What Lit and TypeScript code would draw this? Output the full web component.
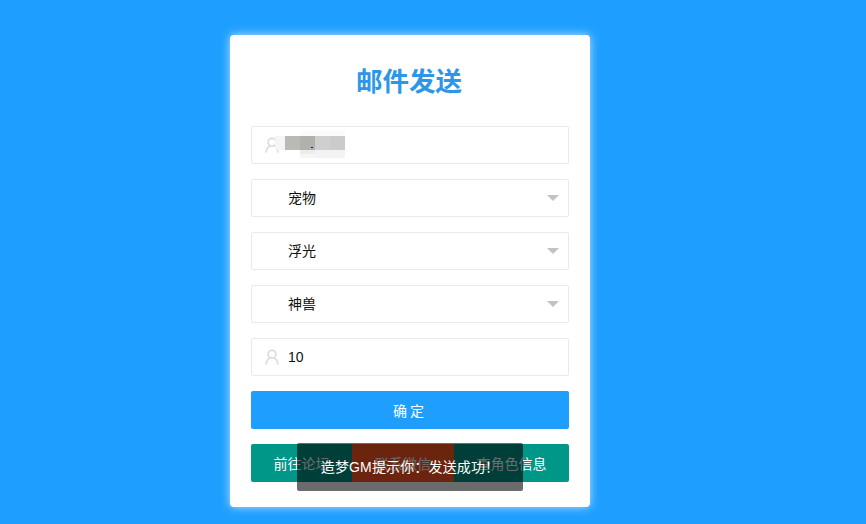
import { LitElement, html, css, svg } from "lit";
import { customElement } from "lit/decorators.js";

const person = svg`<svg class="icon" width="14" height="17" viewBox="0 0 14 17" fill="none" stroke="#dcdcdc" stroke-width="1.7"><circle cx="7" cy="5.2" r="3.9"/><path d="M1 15.6c.3-3.4 2-5.6 3.7-6.6M13 15.6c-.3-3.4-2-5.6-3.7-6.6"/></svg>`;

const mosaic = [
  ["#f5f5f5", -10, 0, 10, 14], ["#b9b9b7", 0, 0, 15, 14], ["#b0b0ad", 15, 0, 15, 14], ["#cfcfd1", 30, 0, 15, 14], ["#cbcbc9", 45, 0, 15, 14],
  ["#ececec", 15, 14, 15, 4], ["#f6f6f6", 15, 18, 15, 4], ["#f3f3f3", 30, 14, 30, 8], ["#fbfbfb", 15, -6, 45, 6],
  ["#222", 26, 11, 2, 1],
] as const;

@customElement("app-root")
export class AppRoot extends LitElement {
  static styles = css`
    :host { display: block; position: relative; height: 524px; overflow: hidden; background: #1e9fff;
      font-family: "Liberation Sans", "Noto Sans CJK SC", sans-serif; font-size: 14px; color: #111; }
    .page { display: flex; padding: 35px 0 0 230px; }
    .card { box-sizing: border-box; width: 360px; height: 472px; padding: 0 21px; background: #fff; border-radius: 4px;
      box-shadow: 0 0 10px rgba(255,255,255,.7); display: flex; flex-direction: column; gap: 15px; }
    h1 { margin: 0; height: 76px; padding: 30px 2px 0 0; box-sizing: border-box; text-align: center; font-size: 26.5px; line-height: 34px;
      font-weight: 700; color: #2d96e8; }
    .field { box-sizing: border-box; height: 38px; border: 1px solid #eaeaea; border-radius: 2px; display: flex; align-items: center;
      padding-left: 36px; position: relative; background: #fff; }
    .select { padding-bottom: 2px; }
    .icon { position: absolute; left: 13px; top: 10px; }
    .arrow { position: absolute; right: 9px; top: 15px; width: 0; height: 0; border: 6px solid transparent; border-top: 6px solid #c2c2c2; border-bottom: 0; }
    .mosaic { position: absolute; left: 33px; top: 9px; width: 0; height: 0; }
    .mosaic i { position: absolute; display: block; }
    .btn { height: 38px; border-radius: 2px; color: #fff; display: flex; align-items: center; justify-content: center; }
    .ok { background: #1e9fff; letter-spacing: 3px; }
    .row { display: grid; grid-template-columns: 101px 102px 115px; height: 38px; }
    .green { background: #009688; }
    .orange { background: #ff5722; border-radius: 0; }
    .first { border-radius: 2px 0 0 2px; }
    .last { border-radius: 0 2px 2px 0; }
    .toast { position: absolute; left: 297px; top: 443px; width: 226px; height: 48px; line-height: 48px; text-align: center;
      background: rgba(0,0,0,.58); color: #fff; border-radius: 2px; font-size: 14px; letter-spacing: .15px; }
  `;

  render() {
    return html`
      <div class="page">
        <main class="card">
          <h1>邮件发送</h1>
          <div class="field">${person}
            <div class="mosaic">${mosaic.map(([c, x, y, w, h]) => html`<i style="background:${c};left:${x}px;top:${y}px;width:${w}px;height:${h}px"></i>`)}</div>
          </div>
          ${["宠物", "浮光", "神兽"].map(t => html`<div class="field select">${t}<span class="arrow"></span></div>`)}
          <div class="field">${person}10</div>
          <div class="btn ok">确定</div>
          <div class="row">
            <div class="btn green first">前往论坛</div>
            <div class="btn orange">联系微信</div>
            <div class="btn green last">查角色信息</div>
          </div>
        </main>
      </div>
      <div class="toast">造梦GM提示你：发送成功！</div>
    `;
  }
}
